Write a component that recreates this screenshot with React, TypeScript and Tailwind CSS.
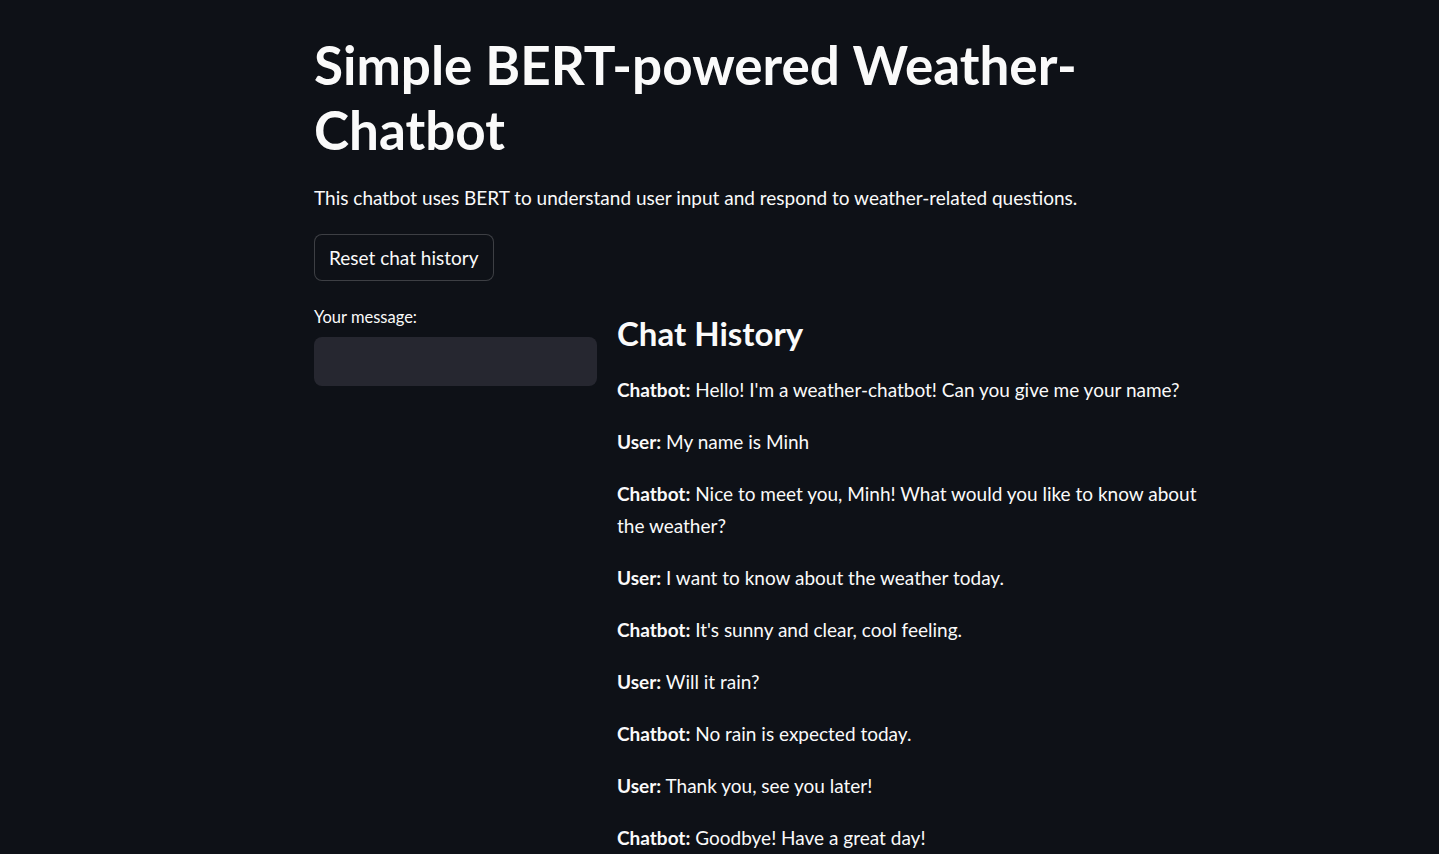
import React from "react";

const chat: { who: string; text: string }[] = [
  { who: "Chatbot", text: "Hello! I'm a weather-chatbot! Can you give me your name?" },
  { who: "User", text: "My name is Minh" },
  { who: "Chatbot", text: "Nice to meet you, Minh! What would you like to know about the weather?" },
  { who: "User", text: "I want to know about the weather today." },
  { who: "Chatbot", text: "It's sunny and clear, cool feeling." },
  { who: "User", text: "Will it rain?" },
  { who: "Chatbot", text: "No rain is expected today." },
  { who: "User", text: "Thank you, see you later!" },
  { who: "Chatbot", text: "Goodbye! Have a great day!" },
];

export default function App() {
  return (
    <div className="min-h-screen bg-[#0e1117] text-[#fafafa] font-['Lato','Liberation_Sans',sans-serif] overflow-hidden">
      <div className="ml-[314px] w-[900px] pt-[32px]">
        <h1 className="text-[53px] font-bold leading-[65px]">
          Simple BERT-powered Weather-Chatbot
        </h1>
        <p className="mt-[20px] text-[19px] leading-[32px]">
          This chatbot uses BERT to understand user input and respond to weather-related questions.
        </p>
        <button className="mt-[20px] h-[47px] px-[14px] rounded-[8px] border border-[rgba(250,250,250,0.2)] bg-[#0e1117] text-[19px] leading-[32px] text-[#fafafa]">
          Reset chat history
        </button>
        <div className="mt-[24px] grid grid-cols-[283px_1fr] gap-[20px] items-start">
          <div className="flex flex-col">
            <label className="text-[16.5px] leading-[24px]">Your message:</label>
            <div className="mt-[8px] h-[49px] rounded-[8px] bg-[#262730]" />
          </div>
          <div className="flex flex-col">
            <h3 className="mt-[8px] text-[33px] font-bold leading-[40px]">Chat History</h3>
            <div className="mt-[21px] flex flex-col gap-[20px]">
              {chat.map((c, i) => (
                <p key={i} className="text-[19px] leading-[32px]">
                  <span className="font-bold">{c.who}:</span> {c.text}
                </p>
              ))}
            </div>
          </div>
        </div>
      </div>
    </div>
  );
}
